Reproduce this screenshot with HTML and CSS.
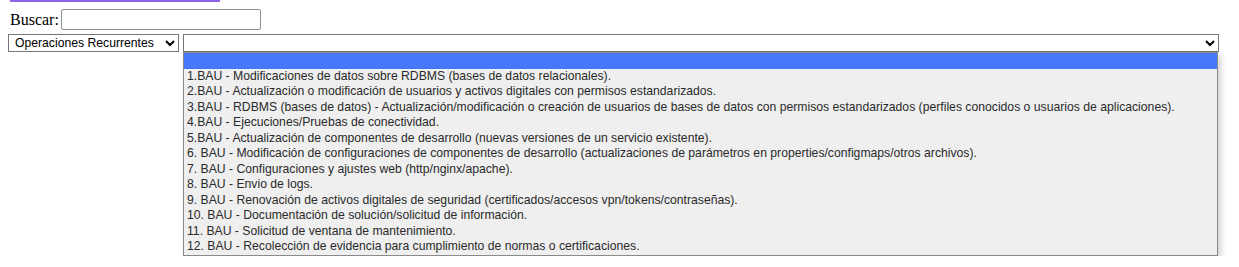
FILE: index.html
```html
<!DOCTYPE html>
<html lang="es">
<head>
  <meta charset="UTF-8" />
  <title>Operaciones</title>
  <link rel="stylesheet" href="styles.css">
</head>
<body>
  <div class="topbar"></div>
  <div class="search-row">
    <label for="buscar">Buscar:</label>
    <input type="text" id="buscar">
  </div>
  <div class="filter-row">
    <select class="categoria">
      <option>Operaciones Recurrentes</option>
    </select>
    <div class="combo">
      <select class="tarea">
        <option></option>
      </select>
      <div class="options-list">
        <div class="opt selected">&nbsp;</div>
        <div class="opt">1.BAU - Modificaciones de datos sobre RDBMS (bases de datos relacionales).</div>
        <div class="opt">2.BAU - Actualización o modificación de usuarios y activos digitales con permisos estandarizados.</div>
        <div class="opt">3.BAU - RDBMS (bases de datos) - Actualización/modificación o creación de usuarios de bases de datos con permisos estandarizados (perfiles conocidos o usuarios de aplicaciones).</div>
        <div class="opt">4.BAU - Ejecuciones/Pruebas de conectividad.</div>
        <div class="opt">5.BAU - Actualización de componentes de desarrollo (nuevas versiones de un servicio existente).</div>
        <div class="opt">6. BAU - Modificación de configuraciones de componentes de desarrollo (actualizaciones de parámetros en properties/configmaps/otros archivos).</div>
        <div class="opt">7. BAU - Configuraciones y ajustes web (http/nginx/apache).</div>
        <div class="opt">8. BAU - Envio de logs.</div>
        <div class="opt">9. BAU - Renovación de activos digitales de seguridad (certificados/accesos vpn/tokens/contraseñas).</div>
        <div class="opt">10. BAU - Documentación de solución/solicitud de información.</div>
        <div class="opt">11. BAU - Solicitud de ventana de mantenimiento.</div>
        <div class="opt">12. BAU - Recolección de evidencia para cumplimiento de normas o certificaciones.</div>
      </div>
    </div>
  </div>
</body>
</html>
```

FILE: styles.css
```css
body {
  margin: 0 8px;
  font-family: 'Liberation Serif', serif;
  font-size: 16px;
  color: #000;
  background: #fff;
}
.topbar {
  margin-left: 2px;
  width: 210px;
  height: 2px;
  background: #8e63ee;
}
.search-row {
  display: flex;
  align-items: center;
  gap: 2px;
  margin-top: 7px;
  padding-left: 2px;
}
.search-row input {
  width: 200px;
  height: 21px;
  box-sizing: border-box;
  border: 1px solid #8f8f8f;
  border-radius: 2px;
  padding: 1px 2px;
  font-family: 'Liberation Sans', sans-serif;
  font-size: 12.2px;
}
.filter-row {
  display: flex;
  align-items: flex-start;
  gap: 4px;
  margin-top: 4px;
}
select {
  height: 18px;
  border: 1px solid #767676;
  border-radius: 0;
  background: #fff;
  font-family: 'Liberation Sans', sans-serif;
  font-size: 12.2px;
  color: #000;
}
.categoria {
  width: 171px;
  padding: 0 0 0 2px;
}
.combo {
  display: flex;
  flex-direction: column;
  width: 1036px;
}
.tarea {
  width: 1036px;
}
.options-list {
  width: 1035px;
  box-sizing: border-box;
  background: #efefef;
  border: 1px solid #8a8a8a;
  box-shadow: 3px 3px 6px rgba(0, 0, 0, 0.18);
  font-family: 'Liberation Sans', sans-serif;
  font-size: 12.2px;
  color: #2a2a2a;
}
.opt {
  height: 15.5px;
  line-height: 15.5px;
  padding-left: 3px;
  white-space: nowrap;
}
.opt.selected {
  background: #4778fb;
}
```
